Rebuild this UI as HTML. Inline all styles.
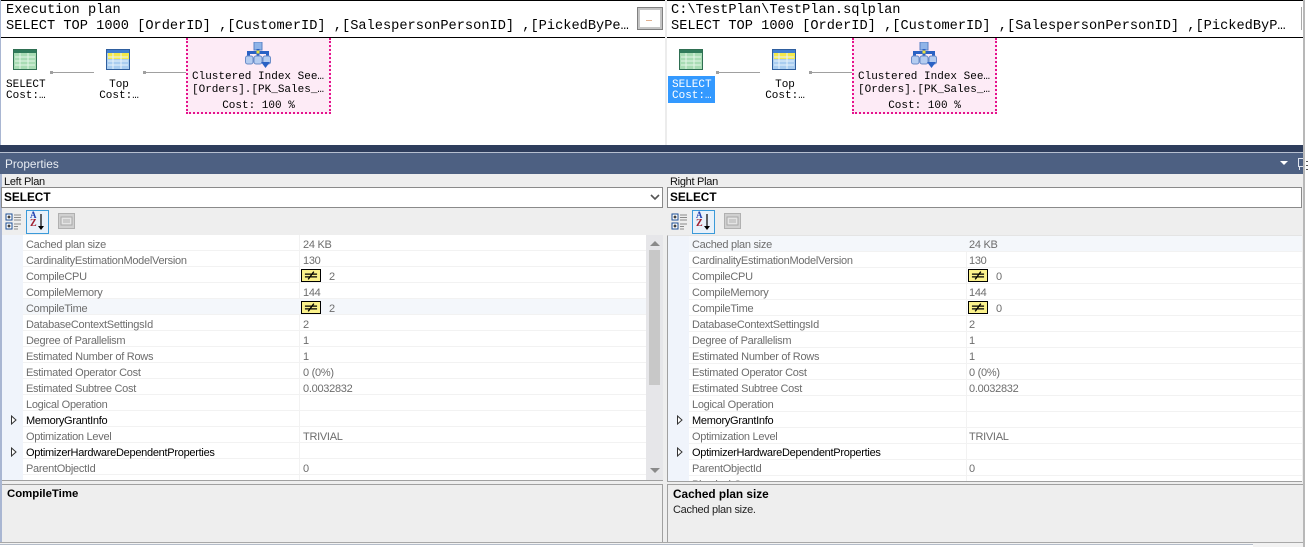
<!DOCTYPE html>
<html><head><meta charset="utf-8">
<style>
html,body{margin:0;padding:0;width:1308px;height:547px;overflow:hidden;background:#fff;font-family:"Liberation Sans",sans-serif}
.a{position:absolute}
.m{position:absolute;font-family:"Liberation Mono",monospace;white-space:pre;color:#000}
.h{font-size:13.66px;line-height:16px}
.n{font-size:11px;line-height:11px;text-align:center}
.t{position:absolute;white-space:pre;font-size:11px;letter-spacing:-.28px;line-height:16px;color:#6d6d6d;margin-top:1px}
.d{color:#000}
.b{font-size:11.8px;letter-spacing:0;font-weight:bold}
.r{position:absolute;height:15px;border-bottom:1px solid #f2f2f2}
.ne{position:absolute;width:20px;height:13px;background:#fbf28c;border:1.5px solid #000;box-sizing:border-box}
</style></head>
<body>
<svg width="0" height="0" style="position:absolute">
<defs>
<symbol id="sel" viewBox="0 0 24 21">
<rect x=".5" y=".5" width="23" height="20" fill="#a8dcb4" stroke="#2f6f52"/>
<rect x="1" y="1" width="22" height="3" fill="#2f7a5a"/>
<path d="M2 8H22M2 12H22M2 16H22M7 4V20M15 4V20" stroke="#e4f6e8" stroke-width="1"/>
</symbol>
<symbol id="top" viewBox="0 0 24 21">
<rect x=".5" y=".5" width="23" height="20" fill="#a9cdf0" stroke="#2f5f9e"/>
<rect x="1" y="1" width="22" height="3" fill="#3f7fd0"/>
<rect x="2" y="4" width="21" height="6" fill="#f4e94a"/>
<path d="M2 8H22M2 12H22M2 16H22M7 4V20M15 4V20" stroke="#e8f2fb" stroke-width="1"/>
</symbol>
<symbol id="ci" viewBox="0 0 26 26">
<rect x="9" y="0" width="8" height="8" fill="#8fb4e8" stroke="#5a82c4"/>
<path d="M13 7V11M3.5 15V10.5H22.5V15M13 10V15" stroke="#2a62c4" stroke-width="3" fill="none"/>
<rect x="11.5" y="8.5" width="3" height="3" fill="#e8e040"/>
<rect x=".5" y="14" width="7.5" height="8" rx="2" fill="#b4ccf0" stroke="#6a8cc8"/>
<rect x="9" y="14" width="8" height="8" rx="2" fill="#b4ccf0" stroke="#6a8cc8"/>
<rect x="18" y="14" width="7.5" height="8" rx="2" fill="#b4ccf0" stroke="#6a8cc8"/>
<path d="M16 20H25L20.5 26Z" fill="#2a62c4"/>
</symbol>
<symbol id="ne" viewBox="0 0 15 9">
<path d="M1 3H14M1 6H14" stroke="#000" stroke-width="1.4"/><path d="M10.5 .3L4.5 8.7" stroke="#000" stroke-width="1.4"/>
</symbol>
<symbol id="tb" viewBox="0 0 72 26">
<rect x="1" y="5" width="6" height="6" fill="#fff" stroke="#1c4f96"/><path d="M2.5 8H5.5M4 6.5V9.5" stroke="#000"/>
<rect x="1" y="14" width="6" height="6" fill="#fff" stroke="#1c4f96"/><path d="M2.5 17H5.5M4 15.5V18.5" stroke="#000"/>
<path d="M9 6H16M9 8.5H16M9 11H16M9 15H16M9 17.5H13M9 20H13" stroke="#8a8a8a" stroke-width="1"/>
<rect x="21.5" y="1.5" width="22" height="23" fill="#e8f1fa" stroke="#3a9ad9"/>
<path d="M36 5V19" stroke="#000" stroke-width="1.2"/><path d="M33 17H39L36 21Z" fill="#000"/>
<rect x="53.5" y="4.5" width="16" height="15" fill="#d0d0d0" stroke="#b0b0b0"/>
<rect x="56" y="8" width="11" height="8" fill="#e4e4e4" stroke="#a8a8a8"/>
<path d="M58 11H65M58 13H65" stroke="#b0b0b0"/>
</symbol>
</defs>
</svg>

<!-- outer -->
<div class="a" style="left:0;top:0;width:1303px;height:1px;background:#000"></div>
<div class="a" style="left:0;top:37px;width:1303px;height:1px;background:#000"></div>
<div class="a" style="left:0;top:0;width:1px;height:145px;background:#a9b6d2"></div>
<div class="a" style="left:665px;top:0;width:2px;height:145px;background:#ececec"></div>
<div class="a" style="left:1303px;top:0;width:2px;height:547px;background:#b8b8b8"></div>

<div class="m h" style="left:6px;top:3px">Execution plan</div>
<div class="m h" style="left:6px;top:19px">SELECT TOP 1000 [OrderID] ,[CustomerID] ,[SalespersonPersonID] ,[PickedByPe…</div>
<div class="a" style="left:637px;top:7px;width:24px;height:21px;background:#fff;border:1px solid #808080;box-shadow:inset 0 0 0 2px #c4c4c4"></div>
<div class="a" style="left:646px;top:20px;width:6px;height:1px;background:#e0b090"></div>
<div class="a" style="left:667px;top:0;width:636px;height:37px;overflow:hidden">
<div class="m h" style="left:4px;top:3px">C:\TestPlan\TestPlan.sqlplan</div>
<div class="m h" style="left:4px;top:19px">SELECT TOP 1000 [OrderID] ,[CustomerID] ,[SalespersonPersonID] ,[PickedByP…</div>
</div>
<div class="a" style="left:1301px;top:7px;width:1px;height:23px;background:#aaa"></div>

<!-- left plan nodes -->
<svg class="a" style="left:13px;top:49px" width="24" height="21"><use href="#sel"/></svg>
<svg class="a" style="left:106px;top:49px" width="24" height="21"><use href="#top"/></svg>
<div class="a" style="left:51px;top:72px;width:43px;height:1px;background:#a0a0a0"></div>
<div class="a" style="left:50px;top:71px;width:3px;height:3px;background:#a0a0a0"></div>
<div class="a" style="left:144px;top:72px;width:43px;height:1px;background:#a0a0a0"></div>
<div class="a" style="left:143px;top:71px;width:3px;height:3px;background:#a0a0a0"></div>
<div class="m n" style="left:6px;top:80px;text-align:left">SELECT
Cost:…</div>
<div class="m n" style="left:98px;top:80px;width:42px">Top
Cost:…</div>
<div class="a" style="left:186px;top:38px;width:145px;height:76px;background:#fdebf6;border:2px dotted #e5128c;border-top:0;box-sizing:border-box"></div>
<svg class="a" style="left:245px;top:42px" width="26" height="26"><use href="#ci"/></svg>
<div class="m n" style="left:192px;top:71px;line-height:13px;text-align:left">Clustered Index See…
[Orders].[PK_Sales_…</div>
<div class="m n" style="left:186px;top:101px;width:145px">Cost: 100 %</div>

<!-- right plan nodes -->
<svg class="a" style="left:679px;top:49px" width="24" height="21"><use href="#sel"/></svg>
<svg class="a" style="left:772px;top:49px" width="24" height="21"><use href="#top"/></svg>
<div class="a" style="left:717px;top:72px;width:43px;height:1px;background:#a0a0a0"></div>
<div class="a" style="left:716px;top:71px;width:3px;height:3px;background:#a0a0a0"></div>
<div class="a" style="left:810px;top:72px;width:43px;height:1px;background:#a0a0a0"></div>
<div class="a" style="left:809px;top:71px;width:3px;height:3px;background:#a0a0a0"></div>
<div class="a" style="left:668px;top:76px;width:47px;height:27px;background:#3399ff"></div>
<div class="m n" style="left:672px;top:80px;color:#fff">SELECT
Cost:…</div>
<div class="m n" style="left:764px;top:80px;width:42px">Top
Cost:…</div>
<div class="a" style="left:852px;top:38px;width:145px;height:76px;background:#fdebf6;border:2px dotted #e5128c;border-top:0;box-sizing:border-box"></div>
<svg class="a" style="left:911px;top:42px" width="26" height="26"><use href="#ci"/></svg>
<div class="m n" style="left:858px;top:71px;line-height:13px;text-align:left">Clustered Index See…
[Orders].[PK_Sales_…</div>
<div class="m n" style="left:852px;top:101px;width:145px">Cost: 100 %</div>

<!-- bands -->
<div class="a" style="left:0;top:145px;width:1303px;height:7px;background:#2e3d5c"></div>
<div class="a" style="left:0;top:152px;width:1303px;height:1px;background:#b6bfd0"></div>
<div class="a" style="left:0;top:153px;width:1303px;height:21px;background:#4d6082"></div>
<div class="t" style="left:5px;top:155px;color:#e8ecf2;font-size:11.8px;letter-spacing:0">Properties</div>
<div class="a" style="left:1280px;top:161px;border:4px solid transparent;border-top:4px solid #fff;border-bottom:0"></div>
<div class="a" style="left:1298px;top:158px;width:4px;height:7px;border:1px solid #dfe4ee;border-right:0"></div>
<div class="a" style="left:1299px;top:166px;width:1px;height:4px;background:#dfe4ee"></div>

<!-- lower bg -->
<div class="a" style="left:0;top:174px;width:1303px;height:369px;background:#eeeeee"></div>
<div class="a" style="left:0;top:174px;width:2px;height:369px;background:#a9b6d2"></div>
<div class="a" style="left:0;top:542px;width:1303px;height:1px;background:#a8a8a8"></div>
<div class="a" style="left:0;top:543px;width:1303px;height:1px;background:#f2f2f2"></div>
<div class="a" style="left:0;top:544px;width:1253px;height:1px;background:#b4bcc8"></div>
<div class="a" style="left:1253px;top:544px;width:50px;height:3px;background:#f2f2f2"></div>

<div class="t" style="left:4px;top:173px;color:#111">Left Plan</div>
<div class="t" style="left:670px;top:173px;color:#111">Right Plan</div>

<div class="a" style="left:1px;top:187px;width:660px;height:19px;background:#fff;border:1px solid #8a8a8a"></div>
<div class="a" style="left:667px;top:187px;width:633px;height:19px;background:#fff;border:1px solid #8a8a8a"></div>
<div class="t d b" style="left:4px;top:188px">SELECT</div>
<div class="t d b" style="left:670px;top:188px">SELECT</div>
<svg class="a" style="left:650px;top:194px" width="10" height="7"><path d="M1 1L5 5L9 1" stroke="#555" stroke-width="1.6" fill="none"/></svg>

<svg class="a" style="left:5px;top:209px" width="72" height="26"><use href="#tb"/></svg>
<svg class="a" style="left:671px;top:209px" width="72" height="26"><use href="#tb"/></svg>
<div class="t" style="left:30px;top:209px;font:bold 9px/10px 'Liberation Serif',serif;letter-spacing:0;color:#2040b0">A</div>
<div class="t" style="left:30px;top:218px;font:bold 10px/10px 'Liberation Serif',serif;letter-spacing:0;color:#a02030">Z</div>
<div class="t" style="left:696px;top:209px;font:bold 9px/10px 'Liberation Serif',serif;letter-spacing:0;color:#2040b0">A</div>
<div class="t" style="left:696px;top:218px;font:bold 10px/10px 'Liberation Serif',serif;letter-spacing:0;color:#a02030">Z</div>

<!-- left grid -->
<div class="a" style="left:2px;top:235px;width:661px;height:245px;background:#fff;overflow:hidden;border-bottom:1px solid #a0a0a0">
<div class="a" style="left:0;top:0;width:21px;height:245px;background:#f0f4fb"></div>
<div class="a" style="left:297px;top:0;width:1px;height:245px;background:#f2f2f2"></div>
<div class="r" style="left:21px;top:0;width:625px"></div>
<div class="r" style="left:21px;top:16px;width:625px"></div>
<div class="r" style="left:21px;top:32px;width:625px"></div>
<div class="r" style="left:21px;top:48px;width:625px"></div>
<div class="r" style="left:21px;top:64px;width:625px;background:#f4f7fb"></div>
<div class="r" style="left:21px;top:80px;width:625px"></div>
<div class="r" style="left:21px;top:96px;width:625px"></div>
<div class="r" style="left:21px;top:112px;width:625px"></div>
<div class="r" style="left:21px;top:128px;width:625px"></div>
<div class="r" style="left:21px;top:144px;width:625px"></div>
<div class="r" style="left:21px;top:160px;width:625px"></div>
<div class="r" style="left:21px;top:176px;width:625px"></div>
<div class="r" style="left:21px;top:192px;width:625px"></div>
<div class="r" style="left:21px;top:208px;width:625px"></div>
<div class="r" style="left:21px;top:224px;width:625px"></div>
<div class="t" style="left:24px;top:1px">Cached plan size</div><div class="t" style="left:301px;top:1px">24 KB</div>
<div class="t" style="left:24px;top:17px">CardinalityEstimationModelVersion</div><div class="t" style="left:301px;top:17px">130</div>
<div class="t" style="left:24px;top:33px">CompileCPU</div><div class="ne" style="left:299px;top:34px"></div><svg class="a" style="left:302px;top:36px" width="14" height="9"><use href="#ne"/></svg><div class="t" style="left:327px;top:33px">2</div>
<div class="t" style="left:24px;top:49px">CompileMemory</div><div class="t" style="left:301px;top:49px">144</div>
<div class="t" style="left:24px;top:65px">CompileTime</div><div class="ne" style="left:299px;top:66px"></div><svg class="a" style="left:302px;top:68px" width="14" height="9"><use href="#ne"/></svg><div class="t" style="left:327px;top:65px">2</div>
<div class="t" style="left:24px;top:81px">DatabaseContextSettingsId</div><div class="t" style="left:301px;top:81px">2</div>
<div class="t" style="left:24px;top:97px">Degree of Parallelism</div><div class="t" style="left:301px;top:97px">1</div>
<div class="t" style="left:24px;top:113px">Estimated Number of Rows</div><div class="t" style="left:301px;top:113px">1</div>
<div class="t" style="left:24px;top:129px">Estimated Operator Cost</div><div class="t" style="left:301px;top:129px">0 (0%)</div>
<div class="t" style="left:24px;top:145px">Estimated Subtree Cost</div><div class="t" style="left:301px;top:145px">0.0032832</div>
<div class="t" style="left:24px;top:161px">Logical Operation</div>
<div class="t d" style="left:24px;top:177px">MemoryGrantInfo</div>
<div class="t" style="left:24px;top:193px">Optimization Level</div><div class="t" style="left:301px;top:193px">TRIVIAL</div>
<div class="t d" style="left:24px;top:209px">OptimizerHardwareDependentProperties</div>
<div class="t" style="left:24px;top:225px">ParentObjectId</div><div class="t" style="left:301px;top:225px">0</div>
<div class="t" style="left:24px;top:241px">Physical Op</div>
<svg class="a" style="left:8px;top:180px" width="8" height="10"><path d="M1.5 1L6 5L1.5 9Z" fill="#fff" stroke="#333"/></svg>
<svg class="a" style="left:8px;top:212px" width="8" height="10"><path d="M1.5 1L6 5L1.5 9Z" fill="#fff" stroke="#333"/></svg>
<div class="a" style="left:644px;top:0;width:17px;height:245px;background:#e6e6e9"></div>
<div class="a" style="left:647px;top:15px;width:11px;height:135px;background:#c8c8c8"></div>
<div class="a" style="left:648px;top:6px;border:5px solid transparent;border-bottom:5px solid #8a8a8a;border-top:0"></div>
<div class="a" style="left:648px;top:233px;border:5px solid transparent;border-top:5px solid #8a8a8a;border-bottom:0"></div>
</div>

<!-- right grid -->
<div class="a" style="left:667px;top:235px;width:634px;height:245px;background:#fff;overflow:hidden;border-left:1px solid #a0a0a0;border-bottom:1px solid #a0a0a0;border-top:1px solid #e4e4e4;box-sizing:content-box">
<div class="a" style="left:0;top:0;width:21px;height:245px;background:#f0f4fb"></div>
<div class="a" style="left:298px;top:0;width:1px;height:245px;background:#f2f2f2"></div>
<div class="r" style="left:21px;top:0;width:614px;background:#f4f7fb"></div>
<div class="r" style="left:21px;top:16px;width:614px"></div>
<div class="r" style="left:21px;top:32px;width:614px"></div>
<div class="r" style="left:21px;top:48px;width:614px"></div>
<div class="r" style="left:21px;top:64px;width:614px"></div>
<div class="r" style="left:21px;top:80px;width:614px"></div>
<div class="r" style="left:21px;top:96px;width:614px"></div>
<div class="r" style="left:21px;top:112px;width:614px"></div>
<div class="r" style="left:21px;top:128px;width:614px"></div>
<div class="r" style="left:21px;top:144px;width:614px"></div>
<div class="r" style="left:21px;top:160px;width:614px"></div>
<div class="r" style="left:21px;top:176px;width:614px"></div>
<div class="r" style="left:21px;top:192px;width:614px"></div>
<div class="r" style="left:21px;top:208px;width:614px"></div>
<div class="r" style="left:21px;top:224px;width:614px"></div>
<div class="t" style="left:24px;top:0px">Cached plan size</div><div class="t" style="left:301px;top:0px">24 KB</div>
<div class="t" style="left:24px;top:16px">CardinalityEstimationModelVersion</div><div class="t" style="left:301px;top:16px">130</div>
<div class="t" style="left:24px;top:32px">CompileCPU</div><div class="ne" style="left:300px;top:33px"></div><svg class="a" style="left:303px;top:35px" width="14" height="9"><use href="#ne"/></svg><div class="t" style="left:328px;top:32px">0</div>
<div class="t" style="left:24px;top:48px">CompileMemory</div><div class="t" style="left:301px;top:48px">144</div>
<div class="t" style="left:24px;top:64px">CompileTime</div><div class="ne" style="left:300px;top:65px"></div><svg class="a" style="left:303px;top:67px" width="14" height="9"><use href="#ne"/></svg><div class="t" style="left:328px;top:64px">0</div>
<div class="t" style="left:24px;top:80px">DatabaseContextSettingsId</div><div class="t" style="left:301px;top:80px">2</div>
<div class="t" style="left:24px;top:96px">Degree of Parallelism</div><div class="t" style="left:301px;top:96px">1</div>
<div class="t" style="left:24px;top:112px">Estimated Number of Rows</div><div class="t" style="left:301px;top:112px">1</div>
<div class="t" style="left:24px;top:128px">Estimated Operator Cost</div><div class="t" style="left:301px;top:128px">0 (0%)</div>
<div class="t" style="left:24px;top:144px">Estimated Subtree Cost</div><div class="t" style="left:301px;top:144px">0.0032832</div>
<div class="t" style="left:24px;top:160px">Logical Operation</div>
<div class="t d" style="left:24px;top:176px">MemoryGrantInfo</div>
<div class="t" style="left:24px;top:192px">Optimization Level</div><div class="t" style="left:301px;top:192px">TRIVIAL</div>
<div class="t d" style="left:24px;top:208px">OptimizerHardwareDependentProperties</div>
<div class="t" style="left:24px;top:224px">ParentObjectId</div><div class="t" style="left:301px;top:224px">0</div>
<div class="t" style="left:24px;top:240px">Physical Op</div>
<svg class="a" style="left:8px;top:179px" width="8" height="10"><path d="M1.5 1L6 5L1.5 9Z" fill="#fff" stroke="#333"/></svg>
<svg class="a" style="left:8px;top:211px" width="8" height="10"><path d="M1.5 1L6 5L1.5 9Z" fill="#fff" stroke="#333"/></svg>
</div>

<!-- description -->
<div class="a" style="left:2px;top:484px;width:661px;height:58px;border:1px solid #a0a0a0;border-left:0;border-bottom:0;box-sizing:border-box"></div>
<div class="a" style="left:667px;top:484px;width:636px;height:58px;border:1px solid #a0a0a0;border-right:0;border-bottom:0;box-sizing:border-box"></div>
<div class="t d b" style="left:7px;top:485px;font-size:11.4px">CompileTime</div>
<div class="t d b" style="left:673px;top:485px">Cached plan size</div>
<div class="t" style="left:673px;top:501px;color:#222">Cached plan size.</div>
<div class="a" style="left:1306px;top:161px;width:2px;height:1px;background:#555"></div>
<div class="a" style="left:1306px;top:165px;width:2px;height:1px;background:#555"></div>
<div class="a" style="left:1306px;top:169px;width:2px;height:1px;background:#555"></div>
</body></html>
